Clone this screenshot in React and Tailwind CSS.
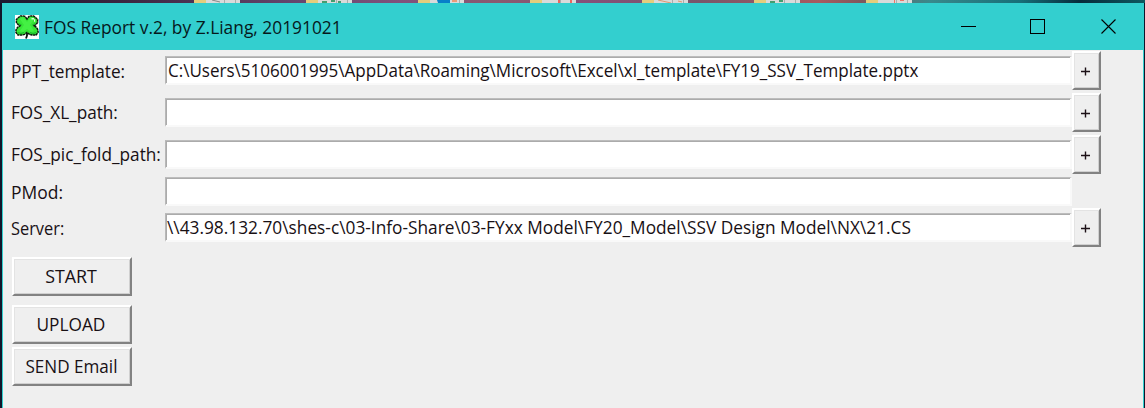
const field =
  "h-[29px] w-[907px] shrink-0 border-t border-l border-t-[#bcbcbc] border-l-[#b8b8b8] border-r-2 border-b-2 border-r-[#f9f9f9] border-b-[#f9f9f9] shadow-[inset_1px_1px_0_#ababab] bg-white pl-[2px] flex items-center overflow-hidden";
const raised =
  "shrink-0 border-2 border-t-white border-l-white border-r-[#828282] border-b-[#828282] bg-[#efefef] shadow-[inset_1px_1px_0_#e3e3e3,inset_-1px_-1px_0_#d0d0d0] flex items-center justify-center";

function Row({ label, labelScale, value, valueScale, height, browse = true }) {
  return (
    <div className={`flex items-center ${height}`}>
      <div className="w-[154px] shrink-0 pl-px">
        <span className={`-ml-px inline-block origin-left whitespace-nowrap ${labelScale}`}>{label}</span>
      </div>
      <div className={field}>
        <span className={`inline-block origin-left whitespace-nowrap ${valueScale || ""}`}>{value}</span>
      </div>
      {browse && (
        <button className={`${raised} h-[39px] w-[29px]`}>
          <svg width="11" height="11" viewBox="0 0 11 11" className="-ml-0.5 mt-0.5" stroke="#1c1016" strokeWidth="1.4">
            <path d="M1 5.5H10M5.5 1.5V9.5" />
          </svg>
        </button>
      )}
    </div>
  );
}

function Action({ children, className }) {
  return (
    <button className={`${raised} h-[39px] w-[120px] pb-0.5 pr-0.5`}>
      <span className={`inline-block whitespace-nowrap ${className}`}>{children}</span>
    </button>
  );
}

function Clover() {
  return (
    <svg width="24" height="24" viewBox="0 0 24 24" className="shrink-0">
      <path fill="#fff" d="M0 0h24v24H0z" />
      <path
        fill="#36e636"
        stroke="#0a160a"
        strokeWidth="1.5"
        strokeDasharray="2.4 0.5"
        d="M12 4 10 1.5 8 .9H5.5L3.5 2.5 1.4 4.5v3L3 9.5l2 1.3L2.5 12.5 1 15v2.5L3 20h4l2.5-.6L12 17.5l2.5 1.9L17 20h4l2-2.5V15l-1.5-2.5-2.5-1.7 2-1.3 1.6-2v-3L20.5 2.5 18.5 .9H16l-2 .6z"
      />
      <path fill="none" stroke="#1cb82c" strokeWidth="1.2" d="M3.5 8.5 6.5 10M20.5 8.5 17.5 10M3 17.5l3 1 3-1M15 17.5l3 1 3-1" />
      <path fill="#44f044" d="m5 4 3-2 4 5 4-5 3 2-4 6 4 6-3 1-4-3-4 3-3-1 4-6z" />
      <path fill="#d4ffd4" d="M16.5 3H19v1.200h1.200v2.500H19V4.500h-2.500z" />
      <path fill="none" stroke="#0a160a" strokeWidth="1.8" d="M12 18v2.500l-1 3" />
    </svg>
  );
}

function Thumb({ children }) {
  return (
    <svg width="46" height="3" viewBox="0 0 46 3" className="shrink-0">
      <path fill="#e4cd7d" d="M0 0h12v3H0z" />
      <path fill="#d9dada" d="M12 0h34v3H12z" />
      <path fill="#a8adad" d="M30 0h1v3h-1zM41 0h1v3h-1z" />
      {children}
    </svg>
  );
}

export default function App() {
  return (
    <div className="h-[408px] w-[1145px] overflow-hidden bg-[#11152a] font-['Open_Sans','Noto_Sans',sans-serif] text-[18px] leading-none text-[#181014]">
      <div className="flex h-[3px] gap-[66px] bg-[linear-gradient(90deg,#1c1830_0px,#3a2540_120px,#66476f_300px,#80517c_400px,#8a5a70_500px,#86507a_580px,#79566b_700px,#a85a60_820px,#80575c_860px,#38898c_930px,#176f78_1020px,#062b3b_1080px,#0e5960_1145px)] pl-[194px]">
        <Thumb><path stroke="#888" d="m18 0 8 2" /></Thumb>
        <Thumb><path stroke="#459d70" strokeWidth="2" d="M16 2h5m4-1h4m3 1h3" /></Thumb>
        <Thumb><path fill="#087fc9" d="M19 0h13v3H20z" /><path fill="#e99b77" d="M34 0h5v2h-5z" /></Thumb>
        <Thumb><path fill="#ec655e" d="M28 0h2v3h-2zM40 0h2v3h-2z" /></Thumb>
        <Thumb><path stroke="#df9870" d="m16 0 13 3M36 1l4 1" /></Thumb>
        <Thumb><path stroke="#459d70" strokeWidth="2" d="M16 2h5m4-1h4" /></Thumb>
        <Thumb><path fill="#ec7568" d="M28 0h1v3h-1zM34 0h4v1h-4z" /></Thumb>
      </div>
      <div className="ml-0.5 flex h-[405px] w-[1142px] flex-col bg-[#33cfcf]">
        <header className="flex h-[47px] shrink-0 items-center">
          <div className="flex h-full items-center pl-[13px]">
            <Clover />
            <span className="ml-[5px] mt-px inline-block origin-left scale-x-[0.913] whitespace-nowrap text-[19px] text-[#06191c]">
              FOS Report v.2, by Z.Liang, 20191021
            </span>
          </div>
          <svg width="156" height="17" viewBox="0 0 156 17" className="ml-auto mr-[27px]" fill="none" stroke="#000">
            <path d="M0 8.5h15" shapeRendering="crispEdges" />
            <path d="M69.5 1.5h14v14h-14z" shapeRendering="crispEdges" />
            <path d="m140.5 1.5 14 14m0-14-14 14" strokeWidth="1.1" />
          </svg>
        </header>
        <main className="ml-px mr-px flex-1 bg-[#efefef] pl-2">
          <Row height="h-[41px]" label="PPT_template:" labelScale="scale-x-[0.955]" value="C:\Users\5106001995\AppData\Roaming\Microsoft\Excel\xl_template\FY19_SSV_Template.pptx" valueScale="scale-x-[0.946]" />
          <Row height="h-[43px]" label="FOS_XL_path:" labelScale="mb-0.5 scale-x-[0.955]" />
          <Row height="h-[41px]" label="FOS_pic_fold_path:" labelScale="mb-0.5 scale-x-[0.957]" />
          <Row height="h-[33px]" label="PMod:" labelScale="scale-x-[0.97]" browse={false} />
          <Row height="h-[39px]" label="Server:" labelScale="scale-x-[0.91]" value="\\43.98.132.70\shes-c\03-Info-Share\03-FYxx Model\FY20_Model\SSV Design Model\NX\21.CS" valueScale="-ml-px scale-x-[0.96]" />
          <div className="mt-[10px] flex flex-col pl-px">
            <Action className="scale-x-[0.99]">START</Action>
            <div className="mt-[9px] flex flex-col gap-[3px]">
              <Action className="scale-x-[0.96]">UPLOAD</Action>
              <Action className="scale-x-[0.95]">SEND Email</Action>
            </div>
          </div>
        </main>
      </div>
    </div>
  );
}
